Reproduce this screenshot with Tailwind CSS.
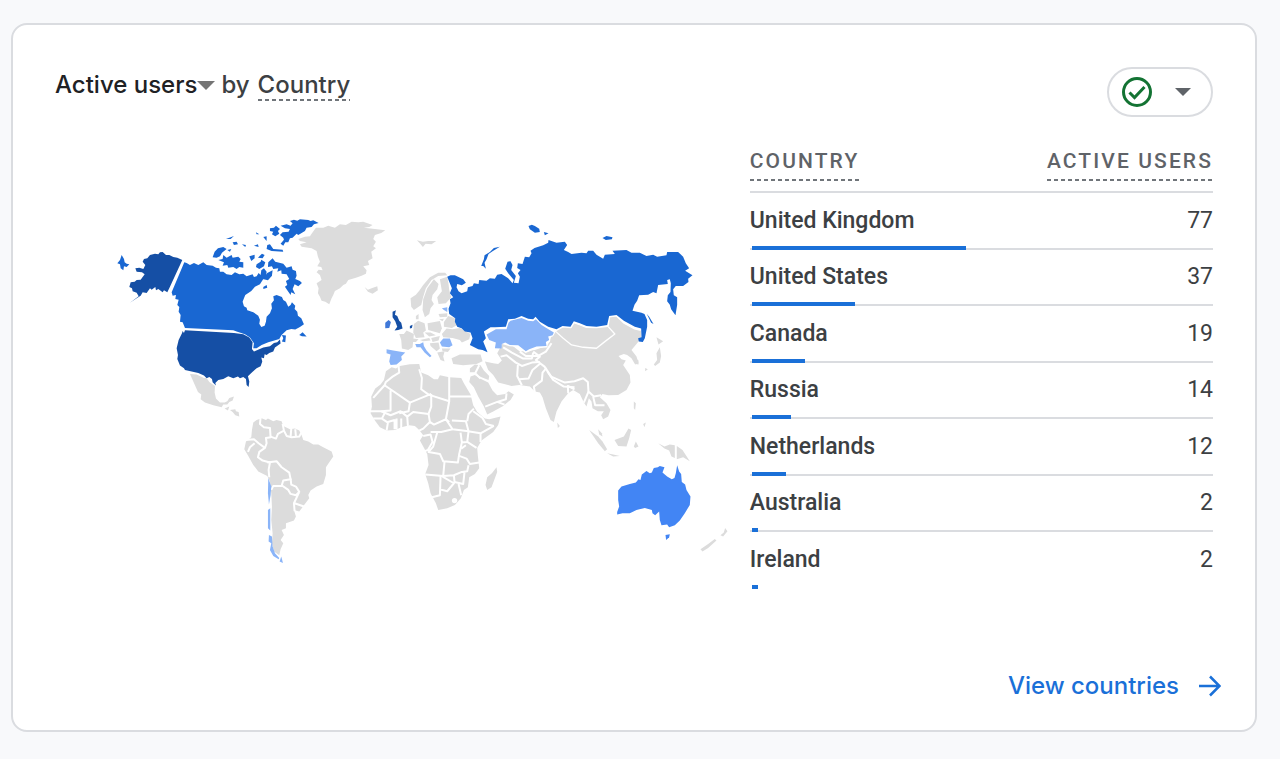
<!DOCTYPE html>
<html lang="en">
  <head>
    <meta charset="UTF-8" />
    <meta name="viewport" content="width=device-width, initial-scale=1.0" />
    <title>Active users by Country</title>
    <script src="https://cdn.jsdelivr.net/npm/@tailwindcss/browser@4"></script>
  </head>
  <body class="flex min-h-screen bg-[#f8f9fb] pt-[23px] pr-[23px] pb-[27px] pl-[11px] font-[Roboto,sans-serif] text-[#3c4043]">
    <main class="flex grow flex-col rounded-2xl border-2 border-[#dadce0] bg-white px-[42px] pt-[42px]">
      <header class="flex items-start justify-between">
        <h1 class="flex items-center pt-0.5 font-[Inter,sans-serif] text-2xl font-medium">
          <button type="button" class="flex items-center text-[#202124]">
            Active users
            <svg class="h-[9px] w-[18px]" viewBox="0 0 18 9" fill="#757575"><path d="M0 0h18L9 9z" /></svg>
          </button>
          <span class="ml-1.5">by</span>
          <span class="ml-2 bg-[repeating-linear-gradient(90deg,#70757a_0_4px,transparent_4px_7px)] bg-[length:100%_2px] bg-bottom bg-no-repeat leading-8">Country</span>
        </h1>
        <button type="button" aria-label="Data quality" class="flex h-[50px] w-[106px] items-center justify-between rounded-full border-2 border-[#dadce0] pr-5 pl-3">
          <svg class="size-8" viewBox="0 0 32 32" fill="none" stroke="#137333" stroke-width="3">
            <circle cx="16" cy="16" r="13.5" />
            <path d="M8.500 16.500l5 5L23.500 11" />
          </svg>
          <svg class="h-2 w-4" viewBox="0 0 16 8" fill="#5f6368"><path d="M0 0h16L8 8z" /></svg>
        </button>
      </header>

      <div class="mt-[26px] flex items-start">
        <div class="w-3/5 pt-[62px] pr-[15px] pl-[30px]">
          <svg class="w-full" viewBox="0 0 1950 1110" role="img" aria-label="Active users world map" stroke-linejoin="round">
            <!-- North America -->
            <g transform="translate(15 0)">
              <g fill="#154fa5">
                <path d="M277 165L240 245L232 262L222 256L218 262L205 252L198 256L196 246L185 254L180 250L170 264L158 262L152 272L140 280L120 293L146 274L140 263L128 259L126 250L118 246L122 232L134 230L140 225L152 224L158 216L164 208L156 202L140 200L136 190L148 188L160 192L166 180L158 170L162 162L172 160L180 150L195 146L205 148L210 142L218 141L228 150L238 150L250 156L262 158Z" />
                <path d="M285 376L432 384L460 388L478 398L488 412L486 432L492 440L520 428L540 424L552 414L562 412L570 404L572 416L555 428L550 440L538 444L530 450L524 448L522 460L514 458L517 470L512 484L500 490L484 504L474 514L478 530L476 546L470 540L468 522L460 516L450 520L444 515L430 520L415 514L400 522L385 525L376 534L378 542L368 532L366 522L358 516L350 520L342 512L325 504L305 500L285 495L282 490L270 482L262 462L264 450L260 430L266 405L276 385L278 378L282 384Z" />
              </g>
              <g fill="#1967d2">
                <path d="M95 150L102 162L104 172L110 176L118 178L110 186L102 184L100 196L92 190L90 178L82 175L90 165Z" />
                <path d="M283 172L290 174L300 180L312 174L325 180L340 172L350 180L368 182L378 188L388 190L390 200L400 200L410 208L425 210L435 202L448 208L460 206L470 214L488 208L492 216L500 214L506 204L512 210L514 196L522 190L530 200L528 216L520 222L510 238L495 245L484 258L466 270L462 280L458 290L462 304L470 308L472 316L490 322L505 332L510 344L508 356L514 366L524 362L528 350L530 335L540 325L546 310L544 296L552 286L550 274L560 270L576 276L580 285L588 290L595 305L602 300L606 292L616 302L614 312L622 320L624 332L634 340L642 358L630 366L616 374L604 372L590 376L575 390L568 402L548 408L535 412L515 420L500 430L490 430L492 415L480 398L465 388L440 380L430 376L285 369L278 352L270 350L272 330L266 320L268 306L262 300L266 284L256 282L258 270L248 272L245 262Z" />
                <path d="M576 390L588 392L586 412L576 410L580 400Z" />
                <path d="M628 390L638 382L650 395L636 394Z" />
                <path d="M535 172L548 160L556 170L580 176L590 188L605 184L608 194L618 198L620 212L616 222L630 228L636 234L625 244L614 238L608 252L616 268L604 262L602 270L592 256L585 245L592 240L588 228L598 222L590 208L575 206L574 196L562 200L565 190L550 192L546 184L534 186Z" />
                <path d="M368 157L374 140L384 130L400 126L410 132L396 143L390 154L380 158Z" />
                <path d="M385 165L398 162L400 150L410 158L425 150L428 158L445 155L452 162L448 170L460 172L460 188L448 186L440 192L430 186L415 188L412 180L398 182L402 172Z" />
                <path d="M408 102L432 93L422 102Z" />
                <path d="M428 112L440 110L444 118L432 120Z" />
                <path d="M456 118L468 120L466 126Z" />
                <path d="M412 135L424 132L420 140Z" />
                <path d="M478 154L494 149L494 160L484 168Z" />
                <path d="M504 158L516 146L524 150L518 160Z" />
                <path d="M500 178L512 170L514 164L526 172L522 184L508 192L498 186Z" />
                <path d="M492 122L504 118L506 126Z" />
                <path d="M520 246L530 240L532 248L520 252Z" />
                <path d="M532 204L548 196L546 212L534 226L518 222Z" />
                <path d="M498 82L508 88L500 88Z" />
                <path d="M520 96L530 94L530 108Z" />
              </g>
            </g>
            <!-- Ellesmere, Greenland, Iceland -->
            <g transform="translate(465 0)">
              <g fill="#1967d2">
                <path d="M150 48L162 44L172 47L180 43L205 45L212 48L220 46L236 54L222 58L215 66L200 68L195 78L175 90L170 86L158 98L150 100L145 112L136 112L130 122L122 116L132 104L130 98L120 90L128 82L146 80L150 72L135 70L122 62L140 58L152 62L158 55Z" />
                <path d="M90 70L102 68L108 62L120 72L114 78L118 86L106 94L96 88L100 80L90 78Z" />
                <path d="M80 132L82 120L90 118L100 132L128 134L130 140L95 138Z" />
              </g>
              <g fill="#dcdcdc">
                <path d="M175 102L195 95L210 94L215 86L228 68L250 68L265 62L285 68L300 58L318 60L335 50L355 52L370 50L398 60L388 66L372 68L405 72L436 76L424 84L405 90L400 102L408 110L400 124L408 130L394 140L398 160L384 168L388 180L370 184L380 196L378 206L365 212L348 218L325 225L318 236L310 240L300 250L285 258L280 270L275 280L268 298L256 290L245 287L240 275L234 265L236 250L230 235L245 225L240 210L230 202L236 194L248 196L244 186L232 184L240 170L234 155L230 138L215 130L185 125L180 118L200 112L180 108Z" />
                <path d="M374 246L384 254L395 250L412 244L414 256L398 266L384 260Z" />
              </g>
            </g>
            <path fill="#dcdcdc" d="M996 106L1014 110L1030 108L1054 108L1040 118L1022 116L1014 126L1006 116Z" />
            <!-- Mexico, Central and South America -->
            <g transform="translate(285 465)">
              <g fill="#dcdcdc">
                <path d="M30 42L50 44L72 54L80 54L88 66L105 78L104 98L108 116L120 128L134 128L142 124L148 114L162 110L158 122L148 126L142 134L130 134L125 142L100 136L75 128L62 118L64 104L54 96L45 76Z" />
                <path d="M134 146L148 140L144 152Z" />
                <path d="M150 150L166 148L168 154L176 156L178 170L166 166L158 156Z" />
                <path d="M216 210L220 188L230 180L245 175L258 180L264 176L280 184L290 180L305 184L310 198L330 208L345 206L358 212L366 228L370 240L385 245L400 254L415 254L430 262L455 275L460 290L446 310L438 322L438 345L430 372L410 380L392 392L385 405L388 415L372 436L358 455L342 450L348 470L342 482L318 490L318 505L305 510L312 525L302 540L310 550L302 568L298 586L282 575L276 550L278 520L274 480L276 440L274 400L270 365L262 348L235 335L220 315L205 288L193 268L198 245L214 232Z" />
              </g>
              <g fill="none" stroke="#fff" stroke-width="6">
                <path d="M242 172L240 192L252 202L270 204L272 232L258 234L260 250L255 264" />
                <path d="M196 240L222 238L236 250L255 264L238 276L234 292L248 302L270 308L266 330L268 352" />
                <path d="M204 276L210 262L224 250" />
                <path d="M272 230L288 236L294 222L312 212L308 192" />
                <path d="M312 212L320 228L335 232L358 230L364 218" />
                <path d="M334 206L332 230M346 208L348 230" />
                <path d="M262 308L290 304L305 322L328 338L332 358L310 362L305 378L280 378L274 390" />
                <path d="M305 376L325 390L332 402L348 406L358 396L348 380L334 374L332 356" />
                <path d="M357 398L342 430L344 454M344 430L372 440" />
              </g>
              <g fill="#8ab4f8">
                <path d="M265 354L274 380L272 405L267 434L264 400Z" />
                <path d="M264 450L271 445L271 512L264 505Z" />
                <path d="M267 525L276 530L278 560L285 580L298 594L296 598L280 588L270 570L274 550L266 545Z" />
                <path d="M304 590L309 609L299 605Z" />
              </g>
            </g>
            <!-- Europe -->
            <g transform="translate(825 165)">
              <g fill="#dcdcdc">
                <path d="M152 115L168 104L178 92L190 75L210 52L235 38L256 38L262 46L235 48L215 60L198 85L190 110L184 135L162 150L154 140Z" />
                <path d="M190 118L202 85L222 58L236 72L232 88L218 105L215 120L222 132L212 145L208 162L195 172L188 150Z" />
                <path d="M240 58L262 50L266 72L268 90L274 112L258 130L236 132L232 112L246 94Z" />
                <path d="M168 168L176 162L176 178L168 178Z" />
                <path d="M118 222L132 222L140 212L162 222L158 262L145 270L126 266L124 240Z" />
                <path d="M162 192L175 182L194 190L198 212L190 218L194 232L168 234L160 218Z" />
                <path d="M203 190L240 183L246 205L240 220L205 210Z" />
                <path d="M194 218L212 218L228 226L208 230Z" />
                <path d="M180 240L208 234L212 242L190 244Z" />
                <path d="M214 234L240 228L236 242L218 246Z" />
                <path d="M210 250L236 248L240 266L230 274L212 258Z" />
                <path d="M232 278L254 274L250 290L254 305L242 300Z" />
                <path d="M246 266L272 266L264 276L248 274Z" />
                <path d="M236 162L262 160L262 170L240 172ZM238 178L252 176L248 184Z" />
                <path d="M252 186L265 168L285 175L292 195L276 204L252 200Z" />
                <path d="M246 222L260 206L278 208L300 204L332 222L328 238L306 248L300 240L278 234L250 232Z" />
                <path d="M160 236L176 238L168 246L158 246Z" />
              </g>
              <g fill="#8ab4f8">
                <path d="M80 268L100 272L136 278L124 290L126 300L110 314L92 315L88 305L92 284L80 280Z" />
                <path d="M166 252L180 252L190 247L192 258L200 272L215 288L210 292L194 278L182 262L170 262Z" />
                <path d="M240 248L250 236L270 236L278 256L268 262L246 260Z" />
                <path d="M246 145L262 142L262 156L252 150Z" />
              </g>
              <path fill="#154fa5" d="M98 155L108 151L105 164L112 168L118 182L124 188L128 206L115 210L104 212L112 200L106 184L98 172Z" />
              <path fill="#3f78d8" d="M76 188L86 180L93 186L88 204L76 205Z" />
              <path fill="#154fa5" d="M150 198L158 194L156 204L150 206Z" />
            </g>
            <!-- Africa and the Middle East -->
            <g transform="translate(825 435)">
              <g fill="#dcdcdc">
                <path d="M34 140L46 116L62 104L72 90L78 64L95 52L108 56L120 48L150 43L178 42L184 68L205 76L222 88L234 88L240 76L268 82L304 84L312 100L332 134L340 166L352 186L375 206L388 208L422 200L415 225L400 246L365 272L352 294L354 318L358 355L345 372L328 382L324 412L312 420L303 445L285 465L262 475L235 480L228 460L212 430L205 400L196 372L206 345L202 312L190 290L180 272L190 256L178 240L165 228L148 226L125 232L105 240L80 242L60 232L45 212L32 190L36 170Z" />
                <path d="M332 80L345 75L365 88L385 98L398 122L412 136L436 132L446 124L462 134L452 150L430 168L400 185L382 194L372 170L355 140L342 112L328 96Z" />
                <path d="M330 56L345 44L362 46L372 62L388 78L386 90L365 82L345 72L330 72Z" />
                <path d="M275 25L300 14L330 14L362 14L368 34L350 42L310 46L280 42Z" />
                <path d="M410 352L412 366L395 412L382 420L377 405L382 382L396 370Z" />
              </g>
              <g fill="none" stroke="#fff" stroke-width="6">
                <path d="M116 48L118 68L98 80L78 96L74 106L150 158L214 132M74 106L40 144M92 122L92 182L64 184L30 184" />
                <path d="M178 58L186 84L184 118L206 134L268 154L268 78M268 140L336 140M268 154L258 208L268 216" />
                <path d="M214 132L214 170L206 192L160 186L142 200L122 184L92 196L64 184M150 158L146 184L118 190" />
                <path d="M206 192L210 216L190 236L178 242M210 216L222 224L258 208L278 238L326 244L318 214L276 212" />
                <path d="M322 214L326 192L342 176M340 184L368 204L378 222L402 228M402 228L362 250L324 244" />
                <path d="M212 246L244 246L278 238M190 258L212 254L218 276L204 300L190 306M232 248L220 290L206 306L240 312L250 334L294 338L298 312L306 278L302 248M326 244L322 276L304 278" />
                <path d="M322 276L350 294M362 250L362 276M318 286L304 296M298 318L320 326L330 342L358 338" />
                <path d="M196 374L250 378L254 334M250 378L282 376L306 366L322 364L326 346M242 380L240 436L216 442M240 418L262 424L282 400L248 380M282 376L284 396L310 402L314 366M296 402L304 436" />
                <path d="M104 208L104 238M110 206L110 238M124 206L124 236M142 200L144 228M76 186L66 206L40 206M66 206L84 218L80 242M84 216L104 210" />
                <path d="M376 170L412 156L434 164M412 156L438 148L440 130" />
                <path d="M328 70L346 70L358 46M346 70L362 86" />
              </g>
              <circle cx="284" cy="452" r="8" fill="#fff" />
            </g>
            <!-- Asia -->
            <g transform="translate(1065 15)">
              <path fill="#dcdcdc" d="M345 362L370 350L395 352L402 338L420 345L445 354L475 350L505 350L510 320L530 318L552 340L585 358L603 360L604 385L590 402L575 420L590 440L596 460L586 464L575 445L562 435L552 432L536 438L545 448L558 452L550 465L570 495L572 518L560 540L535 555L505 556L488 552L480 562L500 580L512 600L505 620L490 628L484 616L492 604L474 604L458 595L455 575L447 565L440 590L432 578L420 552L400 540L385 550L365 575L350 605L342 636L332 630L318 595L308 562L300 548L285 545L270 530L238 525L215 528L175 518L160 495L145 480L135 455L160 460L175 462L186 452L172 430L187 402L215 405L240 425L285 420L320 408L330 395L335 375Z" />
              <g fill="none" stroke="#fff" stroke-width="6">
                <path d="M345 362L370 385L395 405L430 412L470 415L495 395L525 372L505 350" stroke-width="4" />
                <path d="M280 425L300 440L288 450L314 470L334 500L375 518L404 514L430 505L444 516L446 545L462 560L484 556" />
                <path d="M322 484L340 510L372 530L404 532" />
                <path d="M240 425L258 438L295 438L318 425L335 400" />
                <path d="M182 440L200 436L228 458L246 468L276 458L300 456" />
                <path d="M234 465L232 498L246 526M238 508L266 506L278 480L302 460" />
                <path d="M285 548L282 530L306 512L308 488L320 474" />
                <path d="M190 412L216 428L250 446L276 446L280 428" />
                <path d="M385 550L384 528L404 538M446 545L432 578M460 560L466 586L494 586" />
                <path d="M603 360L585 356L552 338L530 317L508 320L504 348L470 352L440 351L420 343L402 337L393 352L368 350L346 362L338 376L326 382L328 392L320 398L320 410L290 412L258 426L235 408L210 406L190 400" />
              </g>
              <g fill="#1967d2">
                <path d="M22 200L32 196L45 196L70 208L78 218L66 226L52 222L50 232L56 244L65 250L82 244L84 232L98 228L102 220L116 222L118 210L140 212L150 205L165 206L172 194L185 192L205 205L218 220L222 210L205 190L196 176L203 155L212 154L218 165L214 180L228 198L222 218L236 220L240 200L234 190L242 180L232 174L234 160L248 162L255 140L268 142L275 130L272 122L284 114L310 106L325 98L326 90L350 98L375 95L382 105L372 120L385 126L395 132L425 128L440 130L445 122L460 122L470 134L490 146L495 134L525 132L518 122L560 120L575 128L600 128L620 138L640 134L652 140L680 136L682 126L715 126L730 140L738 160L748 175L736 182L758 196L745 206L746 216L730 228L708 228L700 238L702 256L712 262L712 285L707 316L694 298L690 284L682 274L684 256L692 246L693 220L690 208L682 210L684 222L655 225L650 250L640 246L625 254L598 256L592 272L584 284L578 302L605 308L614 312L622 330L622 350L615 385L609 396L597 395L595 385L605 382L604 356L585 350L552 332L530 315L508 318L502 345L470 350L440 348L420 340L402 334L392 350L368 348L350 358L325 350L300 335L287 320L280 328L265 326L245 318L225 326L205 328L198 350L165 352L152 352L132 365L138 385L130 395L143 427L128 420L115 418L90 405L98 385L92 368L75 365L65 355L52 350L45 335L46 325L28 312L26 296L32 280L30 268L40 262L30 250L36 235L28 215Z" />
                <path d="M124 168L132 148L134 136L150 126L162 114L180 110L158 124L146 132L140 148L134 158L138 176L130 168Z" />
                <path d="M266 48L276 44L285 48L298 56L300 66L285 68L270 58Z" />
                <path d="M312 66L326 70L315 76Z" />
                <path d="M488 84L500 78L518 82L516 88L498 90Z" />
                <path d="M621 312L628 320L641 342L634 338Z" />
              </g>
              <path fill="#8ab4f8" d="M140 374L168 358L200 358L206 338L212 332L245 324L265 332L280 334L288 328L305 345L322 356L342 368L338 376L325 380L328 390L318 396L320 408L290 410L268 418L258 424L235 406L210 405L196 398L186 402L185 416L165 415L168 398L148 390Z" />
            </g>
            <!-- South-east Asia, Japan and Oceania -->
            <g transform="translate(1335 375)">
              <g fill="#dcdcdc">
                <path d="M178 300L205 320L218 335L232 358L225 364L205 340Z" />
                <path d="M205 298L216 310L218 320L208 314Z" />
                <path d="M254 330L282 320L296 296L304 300L298 325L290 350L265 348Z" />
                <path d="M232 370L250 374L270 378L250 380Z" />
                <path d="M312 215L318 220L316 240L312 235ZM340 282L348 278L344 292Z" />
                <path d="M312 350L318 335L326 350L316 354Z" />
                <path d="M385 340L404 350L420 344L435 346L435 384L425 380L418 362L404 356Z" />
                <path d="M441 348L458 360L480 394L460 382L441 388Z" />
                <path d="M372 104L382 90L380 70L390 52L394 78L390 98L376 108Z" />
                <path d="M380 22L400 34L386 44ZM346 114L354 118L346 124Z" />
                <path d="M316 84L326 92L326 104L318 102Z" />
                <path d="M82 278L90 288L84 294Z" />
                <path d="M512 658L535 642L555 627L560 632L535 654L518 665Z" />
                <path d="M572 616L582 608L586 594L593 604L580 620Z" />
              </g>
              <g fill="#4285f4">
                <path d="M265 482L275 470L300 462L318 458L326 448L332 450L336 434L350 423L360 430L366 428L372 414L384 412L390 408L404 412L398 428L412 440L426 448L434 444L438 430L442 406L448 425L454 432L456 456L466 464L470 480L482 500L480 525L465 550L450 572L435 586L418 592L412 584L395 586L390 570L388 545L376 556L368 550L366 540L345 534L320 540L300 550L278 550L262 554L262 546L268 530L265 510Z" />
                <path d="M407 615L420 613L418 622L409 630Z" />
              </g>
            </g>
          </svg>
        </div>

        <table class="w-2/5 border-separate border-spacing-0 text-[23px] leading-7">
          <thead>
            <tr class="text-[21px] text-[#5f6368]">
              <th scope="col" class="h-[50px] border-b-2 border-[#dadce0] pb-2.5 text-left align-bottom font-medium">
                <span class="inline-block bg-[repeating-linear-gradient(90deg,#70757a_0_4px,transparent_4px_7px)] bg-[length:100%_2px] bg-bottom bg-no-repeat pb-1 leading-8 tracking-widest">COUNTRY</span>
              </th>
              <th scope="col" class="h-[50px] border-b-2 border-[#dadce0] pb-2.5 text-right align-bottom font-medium">
                <span class="inline-block bg-[repeating-linear-gradient(90deg,#70757a_0_4px,transparent_4px_7px)] bg-[length:100%_2px] bg-bottom bg-no-repeat pb-1 leading-8 tracking-widest">ACTIVE USERS</span>
              </th>
            </tr>
          </thead>
          <tbody>
            <tr class="relative h-[57px]">
              <th scope="row" class="border-b-2 border-[#dadce0] text-left font-medium">United Kingdom<span class="absolute bottom-0 left-0.5 h-1 bg-[#1a70d8]" style="width: 46.3%"></span></th>
              <td class="border-b-2 border-[#dadce0] text-right">77</td>
            </tr>
            <tr class="relative h-14">
              <th scope="row" class="border-b-2 border-[#dadce0] text-left font-medium">United States<span class="absolute bottom-0 left-0.5 h-1 bg-[#1a70d8]" style="width: 22.2%"></span></th>
              <td class="border-b-2 border-[#dadce0] text-right">37</td>
            </tr>
            <tr class="relative h-[57px]">
              <th scope="row" class="border-b-2 border-[#dadce0] text-left font-medium">Canada<span class="absolute bottom-0 left-0.5 h-1 bg-[#1a70d8]" style="width: 11.4%"></span></th>
              <td class="border-b-2 border-[#dadce0] text-right">19</td>
            </tr>
            <tr class="relative h-14">
              <th scope="row" class="border-b-2 border-[#dadce0] text-left font-medium">Russia<span class="absolute bottom-0 left-0.5 h-1 bg-[#1a70d8]" style="width: 8.4%"></span></th>
              <td class="border-b-2 border-[#dadce0] text-right">14</td>
            </tr>
            <tr class="relative h-[57px]">
              <th scope="row" class="border-b-2 border-[#dadce0] text-left font-medium">Netherlands<span class="absolute bottom-0 left-0.5 h-1 bg-[#1a70d8]" style="width: 7.3%"></span></th>
              <td class="border-b-2 border-[#dadce0] text-right">12</td>
            </tr>
            <tr class="relative h-14">
              <th scope="row" class="border-b-2 border-[#dadce0] text-left font-medium">Australia<span class="absolute bottom-0 left-0.5 h-1 bg-[#1a70d8]" style="width: 1.3%"></span></th>
              <td class="border-b-2 border-[#dadce0] text-right">2</td>
            </tr>
            <tr class="relative h-[57px]">
              <th scope="row" class="border-b-2 border-transparent text-left font-medium">Ireland<span class="absolute bottom-0 left-0.5 h-1 bg-[#1a70d8]" style="width: 1.3%"></span></th>
              <td class="border-b-2 border-transparent text-right">2</td>
            </tr>
          </tbody>
        </table>
      </div>

      <footer class="mt-auto -mr-2 flex justify-end pb-7">
        <a href="#" class="flex items-center gap-5 font-[Inter,sans-serif] text-2xl font-medium text-[#1a70d8]">
          View countries
          <svg class="size-[22px]" viewBox="0 0 22 22" fill="none" stroke="currentColor" stroke-width="2.500"><path d="M0 11h20M11 1.500L20.500 11L11 20.500" /></svg>
        </a>
      </footer>
    </main>
  </body>
</html>
